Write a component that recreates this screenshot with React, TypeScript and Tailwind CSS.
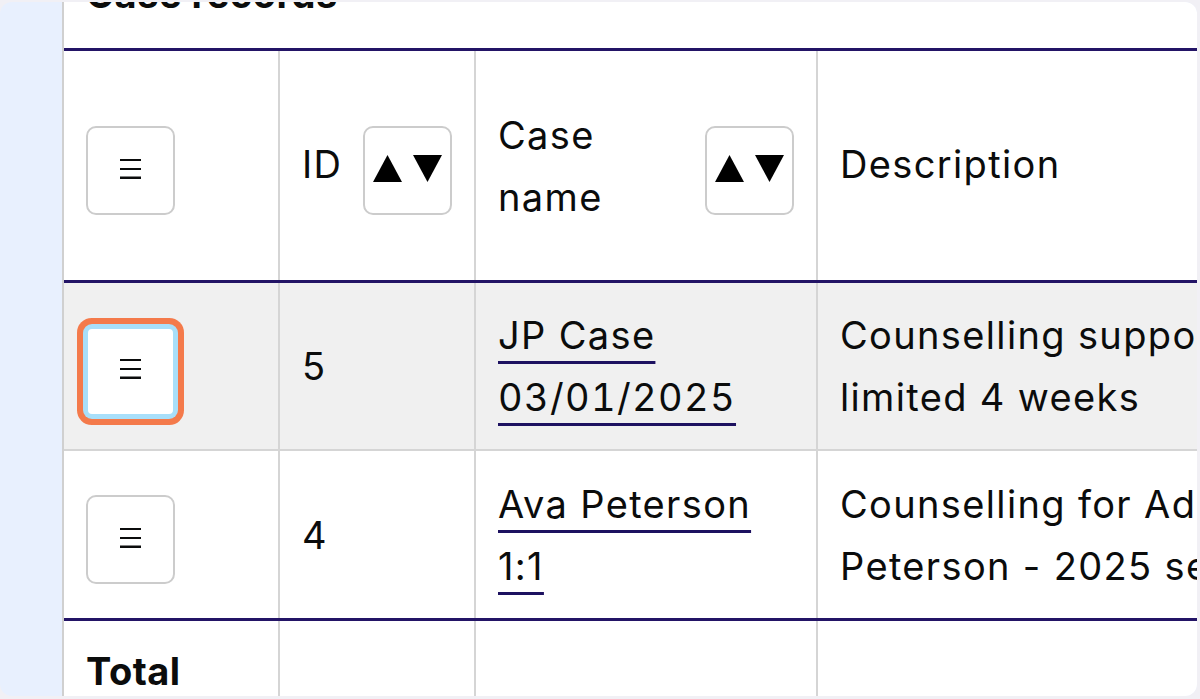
const COLS = "grid grid-cols-[216px_196px_342px_604px]";

const MenuIcon = () => (
  <svg width="21" height="20" viewBox="0 0 21 20" className="mb-[4px]">
    <rect x="0" y="0" width="21" height="2" fill="#0b0c0c" />
    <rect x="0" y="9" width="21" height="2" fill="#0b0c0c" />
    <rect x="0" y="17.5" width="21" height="2.5" fill="#0b0c0c" />
  </svg>
);

const SortIcon = () => (
  <svg width="70" height="29" viewBox="0 0 70 29" className="mb-[4px]">
    <polygon points="0,28 14.5,1 29,28" fill="#000" />
    <polygon points="40,1 69,1 54.5,28" fill="#000" />
  </svg>
);

const MenuButton = ({ focused = false }: { focused?: boolean }) => (
  <button
    className={
      focused
        ? "mt-[10px] w-[89px] h-[89px] rounded-[6px] border-2 border-[#a8dffa] bg-white flex items-center justify-center shadow-[0_0_0_3px_#a8dffa,0_0_0_9px_#f47a4b]"
        : "mt-[10px] w-[89px] h-[89px] rounded-[10px] border-2 border-[#cccccc] bg-white flex items-center justify-center"
    }
  >
    <MenuIcon />
  </button>
);

const SortButton = () => (
  <button className="mt-[10px] w-[89px] h-[89px] shrink-0 rounded-[10px] border-2 border-[#cccccc] bg-white flex items-center justify-center">
    <SortIcon />
  </button>
);

const cell = "border-r-2 border-[#d5d5d5] px-[22px] flex items-center";

const CaseLink = ({ children }: { children: React.ReactNode }) => (
  <a
    href="#"
    className="text-[#0b0c0c] underline decoration-[3px] decoration-[#1d1160] underline-offset-[12px]"
  >
    {children}
  </a>
);

const rows = [
  { id: 5, name: "JP Case", date: "03/01/2025", desc: "Counselling support time limited 4 weeks", focused: true },
  { id: 4, name: "Ava Peterson 1:1", date: "", desc: "Counselling for Adam Peterson - 2025 sessions", focused: false },
];

export default function App() {
  return (
    <div className="w-[1200px] h-[699px] overflow-hidden bg-[#f1f0f5] pt-[2px] pr-[3px] pb-[3px] font-['Inter',sans-serif] text-[#0b0c0c] text-[38px] leading-[62px] tracking-[1.35px]">
      <div className="flex h-full rounded-[12px] overflow-hidden bg-[#e8f0fe]">
        <div className="w-[62px] shrink-0" />
        <div className="flex-1 min-w-0 bg-white border-l-2 border-[#d0d0d0] overflow-hidden">
          {/* Caption, scrolled mostly out of view */}
          <div className="h-[46px] flex items-end pb-[35px] pl-[22px] overflow-hidden">
            <h2 className="font-bold leading-none whitespace-nowrap tracking-[0.5px]">Case records</h2>
          </div>

          {/* Header */}
          <div className={`${COLS} w-max h-[235px] border-t-[3px] border-b-[3px] border-[#231466]`}>
            <div className={cell}>
              <MenuButton />
            </div>
            <div className={`${cell} justify-between`}>
              <span className="-mt-[4px]">ID</span>
              <SortButton />
            </div>
            <div className={`${cell} justify-between`}>
              <span className="w-[190px]">Case name</span>
              <SortButton />
            </div>
            <div className="px-[22px] flex items-center">
              <span className="-mt-[4px]">Description</span>
            </div>
          </div>

          {/* Body rows */}
          {rows.map((row, i) => (
            <div
              key={row.id}
              className={
                i === 0
                  ? `${COLS} w-max h-[168px] bg-[#f0f0f0] border-b-2 border-[#d5d5d5]`
                  : `${COLS} w-max h-[170px] border-b-[3px] border-[#231466]`
              }
            >
              <div className={cell}>
                <MenuButton focused={row.focused} />
              </div>
              <div className={cell}>{row.id}</div>
              <div className={cell}>
                <div className="w-[296px]">
                  <CaseLink>
                    {row.name}
                    {row.date && (
                      <>
                        {" "}
                        <span className="tabular-nums">{row.date}</span>
                      </>
                    )}
                  </CaseLink>
                </div>
              </div>
              <div className="px-[22px] flex items-center">
                <div className="w-[560px]">{row.desc}</div>
              </div>
            </div>
          ))}

          {/* Footer */}
          <div className={`${COLS} w-max h-[80px]`}>
            <div className="border-r-2 border-[#d5d5d5] px-[22px] pt-[19px] font-bold tracking-[0.5px]">Total</div>
            <div className="border-r-2 border-[#d5d5d5]" />
            <div className="border-r-2 border-[#d5d5d5]" />
            <div />
          </div>
        </div>
      </div>
    </div>
  );
}
